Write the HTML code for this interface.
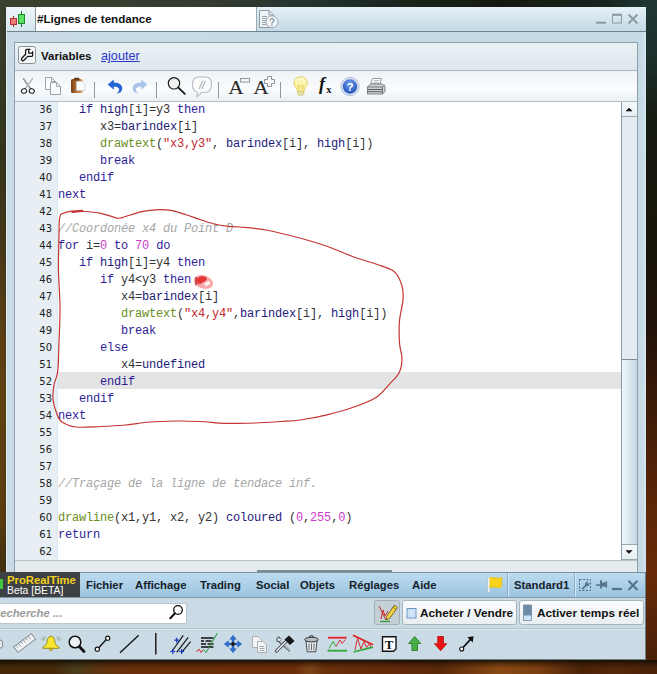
<!DOCTYPE html>
<html lang="fr">
<head>
<meta charset="utf-8">
<title>#Lignes de tendance</title>
<style>
*{box-sizing:border-box;margin:0;padding:0}
html,body{width:657px;height:674px;overflow:hidden}
body{position:relative;font-family:"Liberation Sans",sans-serif;font-size:12px;color:#1a1a1a;background:#2a1a0c}
.abs{position:absolute}
#bg{left:0;top:0;width:657px;height:674px;background:#2a1a0c}
#bgT{left:0;top:0;width:657px;height:8px;background:linear-gradient(90deg,#3a412f 0,#363c2e 200px,#26342f 300px,#19251d 400px,#151a10 500px,#18241e 600px,#1f3836 657px)}
#bgL{left:0;top:0;width:8px;height:674px;background:linear-gradient(180deg,#3a412f 0,#383b27 60px,#33341b 150px,#473818 250px,#5a3f14 330px,#61410f 400px,#5a3c10 520px,#453210 560px,#3a280c 600px,#45280a 660px,#452808 674px)}
#bgLs{left:3px;top:8px;width:5px;height:600px;background:linear-gradient(90deg,rgba(30,30,30,0),rgba(40,40,40,.45))}
#bgR{left:644px;top:0;width:13px;height:674px;background:linear-gradient(180deg,#1f3734 0,#1c2f2b 60px,#161b11 120px,#181408 250px,#21130a 330px,#3a1a08 400px,#5a2608 500px,#672b08 575px,#552408 620px,#45200a 674px)}
#bgB{left:0;top:656px;width:657px;height:18px;background:linear-gradient(90deg,#452808 0,#47290a 55px,#4a3c1c 75px,#5a3410 95px,#6a2f0a 130px,#6c2e0a 295px,#7c4418 310px,#6a300a 325px,#62290a 400px,#5a280a 440px,#8a4a14 500px,#7a3e10 540px,#4c2308 580px,#55260a 615px,#4a2208 657px)}
#bgBs{left:0;top:660px;width:657px;height:8px;background:linear-gradient(180deg,rgba(15,10,4,.9),rgba(15,10,4,.45) 40%,rgba(15,10,4,0))}
/* editor window */
#win{left:6px;top:7px;width:640px;height:575px;background:linear-gradient(90deg,#c8dbe7 0,#c5d9e5 630px,#c9dde9 636px,#d6e6ef 639px,#cfe0ea 640px);border-left:1px solid #e4eef0;border-top:1px solid #e8f4f8}
#titlebar{left:7px;top:7px;width:639px;height:25px;background:linear-gradient(180deg,#e6f1f6 0,#d4e5ee 50%,#c4dae6 100%);border-bottom:1px solid #6f838e}
#tabicon{left:7px;top:7px;width:29px;height:24px;background:linear-gradient(180deg,#eef5f9,#d6e5ee);border-right:1px solid #8796a0}
#tab{left:36px;top:7px;width:221px;height:24px;background:#fff;border-right:1px solid #9aa9b2;font-weight:bold;font-size:11.6px;line-height:24px;padding-left:1px;color:#111;white-space:nowrap}
#inner{left:14px;top:42px;width:624px;height:540px;border:1px solid #8f9fa9;background:#dfe9ef}
#varrow{left:15px;top:43px;width:622px;height:28px;background:linear-gradient(180deg,#eaf1f5,#dde7ed);border-bottom:1px solid #a9b9c2}
#toolrow{left:15px;top:71px;width:622px;height:31px;background:linear-gradient(180deg,#eef3f6 0,#fafcfd 60%,#e9f0f4 100%);border-bottom:1px solid #b3c0c8}
#code{left:15px;top:102px;width:606px;height:458px;background:#fff;overflow:hidden}
#gutter{left:15px;top:102px;width:43px;height:458px;background:#e7eff4;border-right:1px solid #dde6ec}
.ln{position:absolute;left:15px;width:37px;text-align:right;font-size:10px;line-height:17px;height:17px;color:#222;font-family:"DejaVu Sans","Liberation Sans",sans-serif;margin-top:1px}
.cl{position:absolute;left:58px;height:17px;line-height:17px;font-family:"Liberation Mono",monospace;font-size:12px;letter-spacing:-0.2px;white-space:pre;color:#333;margin-top:2px}
.k{color:#2e1e96}.f{color:#6b8e23}.s{color:#c4262c}.n{color:#cc3ccc}.c{color:#a6a6a6;font-style:italic}.b{color:#1c1c78}
#hl{left:58px;top:372px;width:563px;height:17px;background:#e4e4e4}
#sb{left:621px;top:102px;width:16px;height:458px;background:#e3ecf1;border-left:1px solid #8d9aa2}
#sbup{left:622px;top:102px;width:15px;height:15px;background:linear-gradient(180deg,#f6f9fb,#e6eef2);border-bottom:1px solid #9aa8b0}
#sbdn{left:622px;top:544px;width:15px;height:16px;background:linear-gradient(180deg,#f6f9fb,#e6eef2);border-top:1px solid #9aa8b0;border-bottom:1px solid #9aa8b0}
#thumb{left:622px;top:359px;width:15px;height:185px;background:linear-gradient(90deg,#f0f7fa 0,#dbe8ef 50%,#c3d6e0 100%);border-top:1px solid #7f8d95}
/* main app bar */
#main{left:0;top:572px;width:646px;height:88px;background:#cbdbe5;border-right:1px solid #6f7f88;border-bottom:1px solid #6f7f88}
#menurow{left:0;top:572px;width:645px;height:26px;background:linear-gradient(180deg,#bcdcf0 0,#a9cde6 60%,#9cc2dd 100%);border-top:1px solid #7f929c;border-bottom:1px solid #7f98a8}
#logo{left:0;top:572px;width:80px;height:25px;background:#3d4144}
.mi{position:absolute;top:573px;height:24px;line-height:24px;font-weight:bold;font-size:11.3px;color:#15222c;white-space:nowrap}
.btn{position:absolute;background:linear-gradient(180deg,#fafbfc,#e9eef1);border:1px solid #a7b5be;border-radius:3px;font-weight:bold;font-size:11.8px;color:#111;white-space:nowrap}
#ico{left:0;top:0}
</style>
</head>
<body>
<div id="bg" class="abs"></div>
<div id="bgT" class="abs"></div>
<div id="bgL" class="abs"></div>
<div id="bgLs" class="abs"></div>
<div id="bgR" class="abs"></div>
<div id="bgB" class="abs"></div>
<div id="bgBs" class="abs"></div>

<div id="win" class="abs"></div>
<div id="titlebar" class="abs"></div>
<div id="tabicon" class="abs"></div>
<div id="tab" class="abs">#Lignes de tendance</div>
<div id="inner" class="abs"></div>
<div id="varrow" class="abs"></div>
<span class="abs" style="left:41px;top:43px;line-height:27px;font-weight:bold;font-size:11.5px;color:#111">Variables</span>
<span class="abs" style="left:101px;top:43px;line-height:27px;font-size:12.7px;color:#2a35c8;text-decoration:underline">ajouter</span>
<div id="toolrow" class="abs"></div>
<div id="code" class="abs"></div>
<div id="gutter" class="abs"></div>
<div id="hl" class="abs"></div>
<div class="ln" style="top:100px">36</div>
<div class="cl" style="top:100px">   <span class="k">if</span> <span class="b">high</span>[i]=y3 <span class="k">then</span></div>
<div class="ln" style="top:117px">37</div>
<div class="cl" style="top:117px">      x3=<span class="b">barindex</span>[i]</div>
<div class="ln" style="top:134px">38</div>
<div class="cl" style="top:134px">      <span class="f">drawtext</span>(<span class="s">"x3,y3"</span>, <span class="b">barindex</span>[i], <span class="b">high</span>[i])</div>
<div class="ln" style="top:151px">39</div>
<div class="cl" style="top:151px">      <span class="k">break</span></div>
<div class="ln" style="top:168px">40</div>
<div class="cl" style="top:168px">   <span class="k">endif</span></div>
<div class="ln" style="top:185px">41</div>
<div class="cl" style="top:185px"><span class="k">next</span></div>
<div class="ln" style="top:202px">42</div>
<div class="ln" style="top:219px">43</div>
<div class="cl" style="top:219px"><span class="c">//Coordonée x4 du Point D</span></div>
<div class="ln" style="top:236px">44</div>
<div class="cl" style="top:236px"><span class="k">for</span> i=<span class="n">0</span> <span class="k">to</span> <span class="n">70</span> <span class="k">do</span></div>
<div class="ln" style="top:253px">45</div>
<div class="cl" style="top:253px">   <span class="k">if</span> <span class="b">high</span>[i]=y4 <span class="k">then</span></div>
<div class="ln" style="top:270px">46</div>
<div class="cl" style="top:270px">      <span class="k">if</span> y4&lt;y3 <span class="k">then</span></div>
<div class="ln" style="top:287px">47</div>
<div class="cl" style="top:287px">         x4=<span class="b">barindex</span>[i]</div>
<div class="ln" style="top:304px">48</div>
<div class="cl" style="top:304px">         <span class="f">drawtext</span>(<span class="s">"x4,y4"</span>,<span class="b">barindex</span>[i], <span class="b">high</span>[i])</div>
<div class="ln" style="top:321px">49</div>
<div class="cl" style="top:321px">         <span class="k">break</span></div>
<div class="ln" style="top:338px">50</div>
<div class="cl" style="top:338px">      <span class="k">else</span></div>
<div class="ln" style="top:355px">51</div>
<div class="cl" style="top:355px">         x4=<span class="b">undefined</span></div>
<div class="ln" style="top:372px">52</div>
<div class="cl" style="top:372px">      <span class="k">endif</span></div>
<div class="ln" style="top:389px">53</div>
<div class="cl" style="top:389px">   <span class="k">endif</span></div>
<div class="ln" style="top:406px">54</div>
<div class="cl" style="top:406px"><span class="k">next</span></div>
<div class="ln" style="top:423px">55</div>
<div class="ln" style="top:440px">56</div>
<div class="ln" style="top:457px">57</div>
<div class="ln" style="top:474px">58</div>
<div class="cl" style="top:474px"><span class="c">//Traçage de la ligne de tendace inf.</span></div>
<div class="ln" style="top:491px">59</div>
<div class="ln" style="top:508px">60</div>
<div class="cl" style="top:508px"><span class="f">drawline</span>(x1,y1, x2, y2) <span class="b">coloured</span> (<span class="n">0</span>,<span class="n">255</span>,<span class="n">0</span>)</div>
<div class="ln" style="top:525px">61</div>
<div class="cl" style="top:525px"><span class="k">return</span></div>
<div class="ln" style="top:542px">62</div>
<div id="sb" class="abs"></div>
<div id="thumb" class="abs"></div>
<div id="sbup" class="abs"></div>
<div id="sbdn" class="abs"></div>

<div class="abs" style="left:15px;top:560px;width:622px;height:1px;background:#b9c3c9"></div>
<div class="abs" style="left:15px;top:561px;width:622px;height:11px;background:#e4ecf0"></div>
<div class="abs" style="left:257px;top:570px;width:135px;height:2px;background:#7d8d98"></div>
<div id="main" class="abs"></div>
<div id="menurow" class="abs"></div>
<div id="logo" class="abs"></div>
<span class="abs" style="left:7px;top:574px;line-height:12px;font-weight:bold;font-size:11.3px;color:#f0d020;white-space:nowrap">ProRealTime</span>
<span class="abs" style="left:7px;top:585px;line-height:11px;font-size:10.4px;color:#fff;white-space:nowrap">Beta [BETA]</span>
<span class="mi" style="left:86px">Fichier</span>
<span class="mi" style="left:135px">Affichage</span>
<span class="mi" style="left:200px">Trading</span>
<span class="mi" style="left:256px">Social</span>
<span class="mi" style="left:300px">Objets</span>
<span class="mi" style="left:349px">Réglages</span>
<span class="mi" style="left:412px">Aide</span>
<span class="mi" style="left:514px">Standard1</span>
<div class="abs" style="left:-1px;top:603px;width:188px;height:21px;background:#fff;border:1px solid #b9c6ce;border-radius:2px"></div>
<span class="abs" style="left:-8px;top:603px;line-height:20px;font-weight:bold;font-style:italic;font-size:11.3px;color:#9b9b9b;white-space:nowrap">Recherche ...</span>
<div class="abs" style="left:0;top:628px;width:645px;height:1px;background:#b4c4ce"></div>
<div class="abs" style="left:0;top:629px;width:645px;height:1px;background:#dde9f0"></div>
<div class="btn" style="left:402px;top:600px;width:115px;height:25px"></div>
<span class="abs" style="left:420px;top:601px;line-height:24px;font-weight:bold;font-size:11.8px;color:#111;white-space:nowrap">Acheter / Vendre</span>
<div class="btn" style="left:519px;top:600px;width:125px;height:25px"></div>
<span class="abs" style="left:537px;top:601px;line-height:24px;font-weight:bold;font-size:11.8px;color:#111;white-space:nowrap">Activer temps réel</span>
<svg id="ico" class="abs" width="657" height="674" viewBox="0 0 657 674">
<defs>
 <linearGradient id="gBrown" x1="0" y1="0" x2="1" y2="0"><stop offset="0" stop-color="#7a3f14"/><stop offset=".5" stop-color="#b87434"/><stop offset="1" stop-color="#d9a062"/></linearGradient>
 <radialGradient id="gHelp" cx=".5" cy=".3" r=".7"><stop offset="0" stop-color="#6fa0f0"/><stop offset="1" stop-color="#1f4fb8"/></radialGradient>
 <linearGradient id="gBulb" x1="0" y1="0" x2="0" y2="1"><stop offset="0" stop-color="#fdfacb"/><stop offset="1" stop-color="#f8ee8c"/></linearGradient>
</defs>
<!-- title candles -->
<g stroke-width="1">
 <line x1="13.5" y1="16" x2="13.5" y2="27" stroke="#a02828"/>
 <rect x="10.5" y="18.5" width="6" height="6" fill="#f47a78" stroke="#b23030"/>
 <line x1="21.5" y1="11" x2="21.5" y2="27" stroke="#1c7c28"/>
 <rect x="18.5" y="14.5" width="6" height="9" fill="#5be066" stroke="#1f8a2c"/>
</g>
<!-- doc help icon -->
<g fill="none" stroke="#8d9aa2" stroke-width="1">
 <path d="M259.5 10.5 H269 L273.5 15 V27.500 H259.500 Z" fill="#eef3f6"/>
 <path d="M269 10.500 V15 H273.500"/>
 <path d="M262 16.5H267M262 18.500H267M262 20.500H266M262 22.500H266M262 24.500H267" stroke="#9aa6ad"/>
 <circle cx="272" cy="21.800" r="6" fill="#f4f7f9" stroke="#9aa6ad"/>
</g>
<text x="272" y="25.500" font-family="Liberation Sans, sans-serif" font-size="10" font-weight="bold" fill="#8d9aa2" text-anchor="middle">?</text>
<!-- window controls -->
<g stroke="#8a9aa3" fill="none">
 <line x1="596" y1="22.700" x2="606" y2="22.700" stroke-width="2"/>
 <rect x="612.500" y="15" width="9" height="8" stroke-width="1"/>
 <line x1="612" y1="14.700" x2="622" y2="14.700" stroke-width="2"/>
 <path d="M628.500 14.500 L637.500 23.500 M637.500 14.500 L628.500 23.500" stroke-width="1.800"/>
</g>
<!-- wrench button -->
<rect x="18.500" y="46.500" width="17" height="17" rx="2" fill="#f5f7f9" stroke="#8a9399"/>
<path d="M22 58 L25.600 54.300 V50.600 Q25.600 49.400 26.900 49.400 H30 M28.700 49.600 V53 H32.600 M32.600 51.700 V55.600 Q32.600 56.400 31.800 56.400 H27.800 L23.900 60.300 Q22.800 61.300 21.800 60.300 Q20.800 59.200 22 58" fill="none" stroke="#111" stroke-width="1.250" stroke-linejoin="round" stroke-linecap="round"/>
<!-- toolbar: scissors -->
<g fill="none" stroke-linecap="round">
 <path d="M23.500 78.800 L30.800 89" stroke="#8d9296" stroke-width="1.500"/>
 <path d="M32.500 78.800 L25 89" stroke="#b3b8bc" stroke-width="1.500"/>
 <ellipse cx="24" cy="91" rx="2.600" ry="2.300" stroke="#2a2a2a" stroke-width="1.100" transform="rotate(-25 24 91)"/>
 <ellipse cx="31.800" cy="91" rx="2.600" ry="2.300" stroke="#2a2a2a" stroke-width="1.100" transform="rotate(25 31.800 91)"/>
</g>
<!-- copy -->
<g fill="#fbfcfd" stroke="#9aa3a9" stroke-width="1">
 <path d="M45.500 77.500 H51.500 L55.500 81.500 V89.500 H45.500 Z"/>
 <path d="M51.500 77.500 V81.500 H55.500" fill="none"/>
 <path d="M50.500 82.500 H56.500 L60.500 86.500 V94.500 H50.500 Z"/>
 <path d="M56.500 82.500 V86.500 H60.500" fill="none"/>
</g>
<!-- paste -->
<rect x="71" y="79" width="11.500" height="14" rx="1.500" fill="url(#gBrown)"/>
<rect x="74" y="77.800" width="5.500" height="2.600" rx="1" fill="#6a3a12"/>
<path d="M76.500 81.500 H82 L85 84.500 V90.500 H76.500 Z" fill="#fdfdfd" stroke="#c9ccd0" stroke-width=".8"/>
<!-- separators -->
<g stroke="#8f9aa0" stroke-width="1">
 <line x1="94.500" y1="82" x2="94.500" y2="98"/>
 <line x1="156.500" y1="82" x2="156.500" y2="98"/>
 <line x1="218.500" y1="82" x2="218.500" y2="98"/>
 <line x1="280.500" y1="82" x2="280.500" y2="98"/>
</g>
<!-- undo / redo -->
<path d="M107.700 84.600 L113.800 79.600 V82.600 C119.500 82.300 122.600 85.600 122.300 88.800 C122 91.800 119.600 93.400 116.400 93.400 C118.700 92 119.600 90.400 119 88.800 C118.300 87 116.200 86.500 113.800 86.700 V89.700 Z" fill="#2563d6"/>
<path d="M147.300 84.600 L141.200 79.600 V82.600 C135.500 82.300 132.400 85.600 132.700 88.800 C133 91.800 135.400 93.400 138.600 93.400 C136.300 92 135.400 90.400 136 88.800 C136.700 87 138.800 86.500 141.200 86.700 V89.700 Z" fill="#a9c4ea"/>
<!-- magnifier -->
<circle cx="174" cy="83.300" r="5.700" fill="#eef0f2" stroke="#1a1a1a" stroke-width="1.150"/>
<line x1="178.200" y1="87.500" x2="184.800" y2="93.800" stroke="#1a1a1a" stroke-width="1.800" stroke-linecap="round"/>
<!-- comment bubble -->
<path d="M198.500 77 H205.500 C209.500 77 211.500 80 211.500 84.500 C211.500 89.500 209 92.500 204.500 92.500 H201.800 L196.800 96.800 L197.600 92.300 C194.300 91.600 192.500 88.800 192.500 84.500 C192.500 80 194.500 77 198.500 77 Z" fill="#fafbfc" stroke="#b7bcc1" stroke-width="1.100" stroke-linejoin="round"/>
<text x="202" y="88.500" font-family="Liberation Sans, sans-serif" font-size="10" font-style="italic" fill="#8d9399" text-anchor="middle">//</text>
<!-- A- A+ -->
<text transform="translate(228.300 94.300) scale(1.100 1)" font-family="Liberation Serif, serif" font-size="19.500" fill="#2a2a2a">A</text>
<rect x="240.500" y="78.500" width="9" height="3.500" fill="#f4f5f6" stroke="#8f969b"/>
<text transform="translate(253.300 94.300) scale(1.100 1)" font-family="Liberation Serif, serif" font-size="19.500" fill="#2a2a2a">A</text>
<path d="M267.500 76.500 H271.500 V79.500 H274.500 V83.500 H271.500 V86.500 H267.500 V83.500 H264.500 V79.500 H267.500 Z" fill="#f6f7f8" stroke="#8f969b"/>
<!-- bulb -->
<path d="M300.700 76.800 C304.700 76.800 307.300 79.700 307.300 83 C307.300 85.800 305.300 87.200 304.400 89.400 L304 91.500 H297.400 L297 89.400 C296.100 87.200 294.100 85.800 294.100 83 C294.100 79.700 296.700 76.800 300.700 76.800 Z" fill="url(#gBulb)" stroke="#e2cf62" stroke-width="1"/>
<rect x="297.700" y="91.600" width="6" height="3.600" rx="1" fill="#e9e2b0" stroke="#c9bd70" stroke-width=".7"/>
<path d="M299 90.500 L298.300 85 L300.700 86.500 L303.100 85 L302.400 90.500" fill="none" stroke="#d9c450" stroke-width=".7"/>
<!-- fx -->
<text x="319" y="90.300" font-family="Liberation Serif, serif" font-size="18" font-weight="bold" font-style="italic" fill="#111">f</text>
<text x="326.300" y="93" font-family="Liberation Serif, serif" font-size="10.500" font-weight="bold" fill="#111">x</text>
<!-- help -->
<circle cx="350" cy="86.500" r="9.200" fill="#d3dff0" stroke="#a9b9d2" stroke-width=".8"/><circle cx="350" cy="86.500" r="7.200" fill="url(#gHelp)"/>
<text x="350" y="90.600" font-family="Liberation Sans, sans-serif" font-size="11.500" font-weight="bold" fill="#fff" text-anchor="middle">?</text>
<!-- printer -->
<g stroke-width=".9">
 <path d="M372.500 78.500 H381.500 L380 84 H371 Z" fill="#fdfdfd" stroke="#8c9195"/>
 <path d="M374 80.500H379.500M373.500 82.300H379" stroke="#9aa0a4" stroke-width=".7"/>
 <path d="M367.500 87 L370.500 84 H382.500 L385 86.500 V91.500 L382.500 94 H367.500 Z" fill="#cdd1d4" stroke="#767b80"/>
 <path d="M367.500 87 H382.500 L385 84.800" fill="none" stroke="#6d7276"/>
 <path d="M367.500 89.500H382.500M367.500 91.700H382.500" stroke="#5a5f63" stroke-width="1"/>
 <path d="M382.500 87 V94" stroke="#6d7276"/>
</g>
<!-- scrollbar arrows -->
<path d="M626 111 L629 108 L632 111 Z" fill="#111" stroke="#111" stroke-width=".6" stroke-linejoin="round"/>
<path d="M626 550.500 L629 553.500 L632 550.500 Z" fill="#111" stroke="#111" stroke-width=".6" stroke-linejoin="round"/>

<!-- hand-drawn annotation -->
<path d="M82.6 210.4 C80.6 210.6 73.6 210.8 70.4 211.3 C67.2 211.8 65.3 212.3 63.5 213.2 C61.7 214.1 60.5 213.1 59.8 216.8 C59.0 220.5 59.2 226.6 59.0 235.6 C58.8 244.6 58.3 259.1 58.5 271.0 C58.7 282.9 59.9 295.0 60.0 306.8 C60.1 318.6 59.4 331.3 59.0 342.0 C58.6 352.7 58.6 363.6 57.8 370.8 C57.0 378.0 54.8 380.3 54.0 385.0 C53.2 389.7 52.5 394.2 53.0 399.0 C53.5 403.8 55.2 409.7 56.7 413.5 C58.2 417.3 58.8 419.8 62.0 422.0 C65.2 424.2 69.5 426.2 76.0 427.0 C82.5 427.8 92.7 426.8 101.0 426.5 C109.3 426.2 117.4 425.8 125.6 425.0 C133.8 424.2 141.6 422.7 150.0 422.0 C158.4 421.3 167.7 421.1 176.0 421.0 C184.3 420.9 191.7 421.1 200.0 421.5 C208.3 421.9 216.8 423.1 226.0 423.4 C235.2 423.6 245.8 423.3 255.0 423.0 C264.2 422.7 273.5 422.0 281.0 421.5 C288.5 421.0 292.3 421.1 300.0 420.0 C307.7 418.9 318.0 417.0 327.0 414.8 C336.0 412.6 345.8 409.9 354.0 407.0 C362.2 404.1 370.1 401.3 376.0 397.4 C381.9 393.5 385.9 387.9 389.7 383.8 C393.5 379.7 396.9 377.1 399.0 373.0 C401.1 368.9 401.9 364.0 402.0 359.0 C402.1 354.0 399.9 349.3 399.5 343.0 C399.1 336.7 398.9 328.2 399.5 321.0 C400.1 313.8 402.6 305.4 403.0 299.6 C403.4 293.8 403.3 290.5 402.0 286.0 C400.7 281.5 398.4 275.8 395.0 272.4 C391.6 269.0 388.3 268.5 381.5 265.9 C374.7 263.3 363.1 260.3 354.0 257.0 C344.9 253.7 335.8 249.4 327.0 246.3 C318.2 243.2 311.7 241.2 301.5 238.5 C291.3 235.8 276.2 231.9 266.0 230.0 C255.8 228.1 246.2 227.6 240.0 227.0 C233.8 226.4 232.6 226.8 228.7 226.4 C224.8 226.0 221.2 225.6 216.6 224.5 C212.0 223.4 206.4 221.6 201.3 220.0 C196.2 218.4 191.1 216.4 186.0 214.8 C180.9 213.2 176.1 211.2 171.0 210.4 C165.9 209.6 160.8 209.6 155.7 209.8 C150.6 210.1 146.1 210.6 140.5 211.9 C134.9 213.2 126.1 216.6 122.0 217.6 C117.9 218.6 119.5 218.5 116.0 217.8 C112.5 217.1 106.3 214.4 101.0 213.3 C95.7 212.2 88.8 211.7 84.0 211.5 C79.2 211.3 74.0 212.2 72.0 212.3" fill="none" stroke="#c43434" stroke-width="1.200" stroke-linecap="round" stroke-linejoin="round"/>
<ellipse cx="203.500" cy="282" rx="10" ry="6.600" transform="rotate(18 203.500 282)" fill="#ee5a5a" fill-opacity=".5"/>
<ellipse cx="201.500" cy="279.400" rx="5.400" ry="3.100" transform="rotate(-12 201.500 279.400)" fill="#e42a2a" fill-opacity=".9"/>
<ellipse cx="199.300" cy="282.300" rx="2.600" ry="2.200" fill="#e23030" fill-opacity=".75"/>
<ellipse cx="207.300" cy="283.600" rx="3" ry="1.900" transform="rotate(-25 207.300 283.600)" fill="#fff" fill-opacity=".85"/>
<line x1="196" y1="277" x2="196" y2="285.500" stroke="#b01c1c" stroke-width="1.200"/>
<!-- ===== main bar ===== -->
<rect x="0" y="579" width="3" height="10" fill="#3fc43f"/>
<!-- menu row separators -->
<g stroke="#8eb0ca" stroke-width="1"><line x1="507.500" y1="573" x2="507.500" y2="597"/><line x1="574.500" y1="573" x2="574.500" y2="597"/></g>
<g stroke="#d3e8f5" stroke-width="1"><line x1="508.500" y1="573" x2="508.500" y2="597"/><line x1="575.500" y1="573" x2="575.500" y2="597"/></g>
<!-- flag -->
<path d="M489.300 578.300 C492.500 575.800 497 579.800 501.800 577.300 L501.500 586.800 C497 589.300 492.800 585.200 489.300 588 Z" fill="#f9d21c" stroke="#e6bc10" stroke-width=".8"/>
<line x1="488.600" y1="577.500" x2="488.600" y2="592" stroke="#f6f8fa" stroke-width="1.600"/>
<line x1="487.600" y1="577.500" x2="487.600" y2="592" stroke="#a9b7c2" stroke-width=".6"/>
<!-- wrench dashed box -->
<rect x="579.500" y="579.500" width="11" height="11" fill="none" stroke="#4f6d86" stroke-width="1" stroke-dasharray="2 1.500"/>
<path d="M582 588.500 L585.500 585 C585 583.300 586 581.800 588 581.600 L586.900 583.200 L587.800 584.200 L589.300 583.200 C589.300 585 587.800 586.300 586.300 585.900 L582.900 589.300 Z" fill="#4f6d86" stroke="#4f6d86" stroke-width=".6"/>
<!-- pin -->
<g fill="#557389"><rect x="595.800" y="584.300" width="4.500" height="1.500"/><rect x="600" y="580.300" width="2" height="8.200"/><rect x="602" y="582.500" width="4" height="4"/><rect x="605.600" y="581.300" width="1.500" height="6.400"/></g>
<!-- min / close -->
<line x1="612" y1="589" x2="622" y2="589" stroke="#557389" stroke-width="2.200"/>
<path d="M628.500 580.800 L637.500 590 M637.500 580.800 L628.500 590" stroke="#557389" stroke-width="2" fill="none"/>
<!-- search magnifier -->
<circle cx="178" cy="610" r="4.300" fill="#fff" stroke="#111" stroke-width="1.300"/>
<line x1="175" y1="613.300" x2="170.300" y2="618.300" stroke="#111" stroke-width="2" stroke-linecap="round"/>
<!-- pencil toggle button -->
<rect x="374.500" y="600.500" width="25" height="24" rx="2" fill="#c5cfd6" stroke="#a3afb7"/>
<path d="M379 606 L386 620 M381 619 L383 610 L385 616 L388 611" fill="none" stroke="#c83030" stroke-width="1"/>
<path d="M380 621.500 H390" stroke="#2c9a3a" stroke-width="1.200"/>
<path d="M394.500 605 L397.500 607.500 L389.500 618.500 L386 620 L386.800 616.200 Z" fill="#f5d640" stroke="#5a4a10" stroke-width=".8"/>
<path d="M393 607 L396 609.500" stroke="#5a4a10" stroke-width=".7"/>
<!-- checkbox icon in Acheter -->
<rect x="407" y="608.500" width="9" height="9.500" fill="#cfe4f8" stroke="#6f97c4"/>
<!-- icon in Activer -->
<rect x="523.500" y="605" width="8" height="15.500" fill="#cfe4f8"/>
<rect x="523.500" y="605" width="8" height="10.500" fill="#6d8ca8"/>
<rect x="523.500" y="605" width="8" height="15.500" fill="none" stroke="#6d8ca8" stroke-width=".8"/>
<!-- row 3 icons -->
<path d="M0 640 C2 640 3 642 2 644 C3.500 645 3 648 0 648" fill="#e6ebee" stroke="#6d7880" stroke-width="1"/>
<!-- ruler -->
<g transform="rotate(-37 24.600 643)">
 <rect x="13.600" y="639.500" width="22" height="7" fill="#f0f3f5" stroke="#868e94" stroke-width="1"/>
 <path d="M16.500 639.500v3M19.500 639.500v4M22.500 639.500v3M25.500 639.500v4M28.500 639.500v3M31.500 639.500v4" stroke="#868e94" stroke-width=".8"/>
</g>
<!-- bell -->
<path d="M51 636.200 C48.300 636.600 47.300 638.800 47.100 641.500 C46.900 644.500 45.500 646 42.800 647.300 V648.300 H59.200 V647.300 C56.500 646 55.100 644.500 54.900 641.500 C54.700 638.800 53.700 636.600 51 636.200 Z" fill="#f8e72e" stroke="#8f8416" stroke-width=".9" stroke-linejoin="round"/>
<path d="M49.200 648.600 C49.200 651.400 52.800 651.400 52.800 648.600 Z" fill="#ecd020" stroke="#8f8416" stroke-width=".7"/>
<path d="M45.300 637 C44 638 43.400 639.300 43.300 640.600 M56.700 637 C58 638 58.600 639.300 58.700 640.600" fill="none" stroke="#6d7d52" stroke-width=".9"/>
<path d="M43.400 636.300 C42 637.500 41.400 639 41.300 640.400 M58.600 636.300 C60 637.500 60.600 639 60.700 640.400" fill="none" stroke="#9aa686" stroke-width=".7"/>
<!-- magnifier -->
<circle cx="75" cy="642" r="5.800" fill="#eef1f3" stroke="#111" stroke-width="1.500"/>
<line x1="79.500" y1="646.800" x2="84" y2="651.500" stroke="#111" stroke-width="2.800" stroke-linecap="round"/>
<!-- segment with circles -->
<line x1="97.500" y1="649" x2="107.500" y2="638.300" stroke="#111" stroke-width="1.300"/>
<circle cx="97.300" cy="649.200" r="2.100" fill="#fff" stroke="#111" stroke-width="1.100"/>
<circle cx="107.700" cy="638.200" r="2.100" fill="#fff" stroke="#111" stroke-width="1.100"/>
<!-- line -->
<line x1="120" y1="652.800" x2="138.700" y2="635.200" stroke="#111" stroke-width="1.300"/>
<!-- separator -->
<line x1="155.800" y1="633" x2="155.800" y2="654.500" stroke="#111" stroke-width="1.400"/>
<!-- parallel lines -->
<g stroke="#111" stroke-width="1.100"><line x1="171.800" y1="651.500" x2="183.300" y2="635.400"/><line x1="176.700" y1="652.400" x2="188.200" y2="637.300"/><line x1="181.600" y1="652.400" x2="190.600" y2="641.700"/></g>
<g stroke="#1838c8" stroke-width="1.200"><path d="M174.200 640.200h5M176.700 637.700v5M170.300 651.500h5M172.800 649v5M179.100 651.500h5M181.600 649v5"/></g>
<!-- indicator chart -->
<g stroke="#111" stroke-width="1.500"><path d="M201 638H213.500M201 641H204M205.500 641H211.500M201 644H206M207.500 644H213.500M201 647H213.500"/></g>
<path d="M209.500 646.500 L217.300 633.300" stroke="#2c9a3a" stroke-width="1.100" fill="none"/>
<path d="M196.500 652 L199 649 L201 652.500 L203.500 649.500" stroke="#d03030" stroke-width="1" fill="none"/>
<path d="M203.500 649.500 L206 652.500 L209.500 646.500" stroke="#2c9a3a" stroke-width="1" fill="none"/>
<!-- move arrows -->
<g fill="#2f6fd0" stroke="#1f56b0" stroke-width=".5">
 <path d="M233 635.300 L236.200 639.300 H234 V642 H232 V639.300 H229.800 Z"/>
 <path d="M233 652.700 L236.200 648.700 H234 V646 H232 V648.700 H229.800 Z"/>
 <path d="M224.300 644 L228.300 640.800 V643 H231 V645 H228.300 V647.200 Z"/>
 <path d="M241.700 644 L237.700 640.800 V643 H235 V645 H237.700 V647.200 Z"/>
</g>
<circle cx="233" cy="644" r="2" fill="#111"/>
<!-- copy gray -->
<g fill="#f3f5f6" stroke="#a9b1b6" stroke-width="1">
 <path d="M252.500 636.500 H258 L261.500 640 V647.500 H252.500 Z"/>
 <path d="M257.500 641.500 H263 L266.500 645 V652.500 H257.500 Z"/>
</g>
<path d="M259.500 646.500H264.500M259.500 648.500H264.500M259.500 650.500H264.500" stroke="#8a9298" stroke-width=".8"/>
<!-- tools -->
<path d="M277.500 650.500 L287.500 640.500" stroke="#d8dde0" stroke-width="3.600" stroke-linecap="round"/>
<path d="M277.500 650.500 L287.500 640.500" stroke="#555c62" stroke-width="1" stroke-dasharray="0" fill="none" opacity=".0"/>
<path d="M279 637 C277 637.500 276.300 639.500 277.200 641.300 L279.500 641.500 L281 639.800 Z M278 641 L290 651.500" fill="#dfe3e6" stroke="#4a5157" stroke-width="1.100"/>
<path d="M280 640 L291 650.500" stroke="#e4e8ea" stroke-width="2.400" stroke-linecap="round"/>
<path d="M280 640 L291 650.500" stroke="#4a5157" stroke-width=".6" fill="none"/>
<path d="M276.500 651 L286 641.500" stroke="#4a5157" stroke-width="3.200" stroke-linecap="round"/>
<path d="M276.800 650.800 L286 641.500" stroke="#e8ecee" stroke-width="1.600" stroke-linecap="round"/>
<path d="M284.500 639.500 L289 635.500 L294.500 641 L290 645 Z" fill="#15181a"/>
<!-- trash -->
<path d="M306 641 H317 L315.800 651.800 H307.200 Z" fill="#e4e7e9" stroke="#4a4f54" stroke-width="1"/>
<ellipse cx="311.500" cy="639.600" rx="6.800" ry="2.300" fill="#b9bec2" stroke="#33373a" stroke-width="1"/>
<path d="M309 643.500V650.300M311.500 643.500V650.300M314 643.500V650.300" stroke="#6a7075" stroke-width="1"/>
<path d="M309.500 637.300 C309.500 635.300 313.500 635.300 313.500 637.300" fill="none" stroke="#33373a" stroke-width="1.100"/>
<!-- chart lines -->
<line x1="328" y1="637.700" x2="346.500" y2="637.700" stroke="#e02020" stroke-width="1.800"/>
<line x1="327.500" y1="650.700" x2="347" y2="650.700" stroke="#30a838" stroke-width="1.800"/>
<path d="M329 648.500 L333 641.500 L336 646.500" fill="none" stroke="#30a838" stroke-width="1"/>
<path d="M336 646.500 L340 640 L342 643.500 L345.500 639.500" fill="none" stroke="#d03030" stroke-width="1"/>
<!-- triangle -->
<line x1="353" y1="635.200" x2="373" y2="644.800" stroke="#e02020" stroke-width="1.800"/>
<line x1="353.500" y1="652" x2="373" y2="647.200" stroke="#30a838" stroke-width="1.800"/>
<path d="M355 650 L357.500 638.500 L361 649 L364 641.500 L366.500 647.500 L369 644 L371 647" fill="none" stroke="#d03030" stroke-width="1"/>
<!-- T box -->
<path d="M382.500 636.800 H396 V649 L393.500 651.300 H382.500 Z" fill="#fff" stroke="#111" stroke-width="1.400"/>
<text x="389.200" y="649" font-family="Liberation Serif, serif" font-size="13" font-weight="bold" fill="#111" text-anchor="middle">T</text>
<!-- green up arrow -->
<path d="M414.700 636.500 L420.800 643.500 H417.500 V650.500 H411.900 V643.500 H408.600 Z" fill="#46b046" stroke="#2a7a2a" stroke-width=".9"/>
<!-- red down arrow -->
<path d="M440.600 650.700 L446.700 643.700 H443.400 V636.500 H437.800 V643.700 H434.500 Z" fill="#ee1414" stroke="#b80c0c" stroke-width=".9"/>
<!-- arrow line -->
<line x1="463" y1="647.500" x2="471" y2="638.800" stroke="#111" stroke-width="1.800"/>
<path d="M473.500 636.300 L472.800 642.600 L467.300 637.300 Z" fill="#111"/>
<circle cx="461.700" cy="649" r="2" fill="#fff" stroke="#111" stroke-width="1.100"/>
</svg>

</body>
</html>
